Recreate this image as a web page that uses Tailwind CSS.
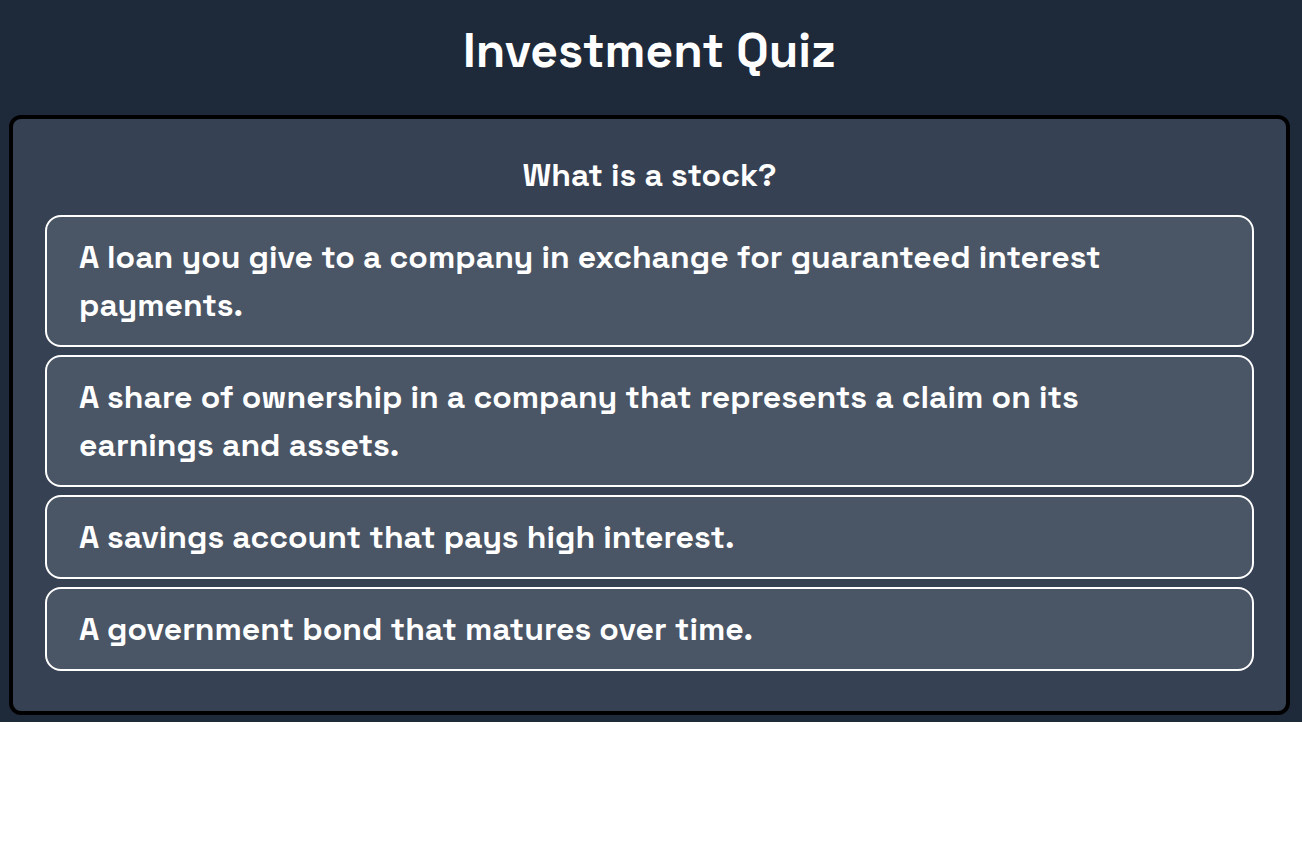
<!DOCTYPE html>
<html lang="en">
<head>
<meta charset="utf-8">
<meta name="viewport" content="width=device-width, initial-scale=1">
<title>Investment Quiz</title>
<script src="https://cdn.jsdelivr.net/npm/@tailwindcss/browser@4"></script>
</head>
<body class="bg-white font-['Space_Grotesk',Inter,sans-serif] text-white">
<main class="bg-gray-800 pt-[21px] pr-3 pb-[7px] pl-[9px]">
  <h1 class="text-center text-[48px] leading-[60px] font-bold">Investment Quiz</h1>
  <form class="mt-[34px] rounded-xl border-4 border-black bg-gray-700 px-8 pt-8 pb-10">
    <h2 class="text-center text-[32px] leading-[48px] font-semibold">What is a stock?</h2>
    <div class="mt-4 flex flex-col gap-2 text-[32px] leading-[48px] font-semibold">
      <button type="button" class="rounded-2xl border-2 border-white bg-gray-600 px-8 py-4 text-left">A loan you give to a company in exchange for guaranteed interest payments.</button>
      <button type="button" class="rounded-2xl border-2 border-white bg-gray-600 px-8 py-4 text-left">A share of ownership in a company that represents a claim on its earnings and assets.</button>
      <button type="button" class="rounded-2xl border-2 border-white bg-gray-600 px-8 py-4 text-left">A savings account that pays high interest.</button>
      <button type="button" class="rounded-2xl border-2 border-white bg-gray-600 px-8 py-4 text-left">A government bond that matures over time.</button>
    </div>
  </form>
</main>
</body>
</html>
